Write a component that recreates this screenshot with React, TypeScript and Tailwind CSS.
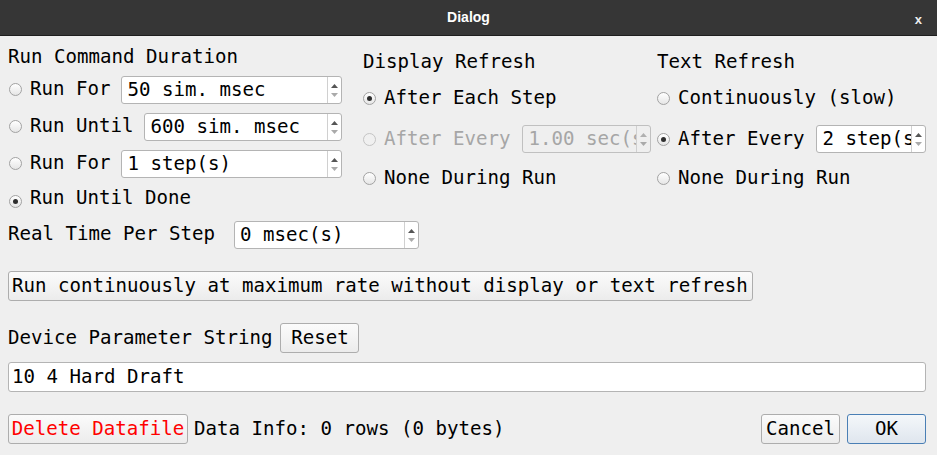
import React from "react";

const mono = "font-['DejaVu_Sans_Mono',monospace]";

function Radio({ checked = false, disabled = false }: { checked?: boolean; disabled?: boolean }) {
  return (
    <span
      className={`relative inline-flex h-[13px] w-[13px] shrink-0 items-center justify-center rounded-full border ${
        disabled ? "border-[#c4c4c4] bg-[#f0f0f0]" : "border-[#a2a2a2] bg-gradient-to-b from-[#ffffff] to-[#e6e6e6]"
      }`}
    >
      {checked && <span className="h-[5px] w-[5px] rounded-full bg-[#2e2e2e]" />}
    </span>
  );
}

function Spin({ value, width, disabled = false }: { value: string; width: string; disabled?: boolean }) {
  return (
    <div
      className={`flex h-[28px] ${width} shrink-0 overflow-hidden rounded-[3px] border ${
        disabled ? "border-[#c0c0c0] bg-[#efefef] text-[#a6a6a6]" : "border-[#b4b4b4] bg-white text-black"
      }`}
    >
      <div className="min-w-0 flex-1 overflow-hidden whitespace-nowrap pl-[5px] leading-[26px]">{value}</div>
      <div className="flex w-[14px] shrink-0 flex-col items-center justify-center gap-[5px] border-l border-[#d0d0d0]">
        <svg width="7" height="4" viewBox="0 0 7 4">
          <polygon points="0,4 7,4 3.5,0" fill={disabled ? "#b0b0b0" : "#555"} />
        </svg>
        <svg width="7" height="4" viewBox="0 0 7 4">
          <polygon points="0,0 7,0 3.5,4" fill="#aaa" />
        </svg>
      </div>
    </div>
  );
}

function Btn({ children, className = "" }: { children: React.ReactNode; className?: string }) {
  return (
    <div
      className={`flex h-[30px] shrink-0 items-center rounded-[3px] border border-[#adadad] bg-gradient-to-b from-[#fbfbfb] to-[#ececec] leading-[28px] ${className}`}
    >
      {children}
    </div>
  );
}

export default function App() {
  return (
    <div className={`h-[455px] w-[937px] overflow-hidden bg-[#efefef] text-[19.1px] text-black ${mono}`}>
      <div className="relative flex h-[36px] items-center justify-center border-b border-[#1e1e1e] bg-[#363636]">
        <span className="font-['Liberation_Sans',sans-serif] text-[14px] font-bold text-white">Dialog</span>
        <span className="absolute right-[15px] top-[10px] font-['Liberation_Sans',sans-serif] text-[13px] font-bold text-[#eeeeee]">
          x
        </span>
      </div>
      <div className="flex flex-col px-[8px] pt-[10px]">
        <div className="flex">
          {/* Column 1 */}
          <div className="flex w-[355px] flex-col">
            <div className="h-[22px] leading-[22px]">Run Command Duration</div>
            <div className="mt-[8px] flex h-[28px] items-center">
              <span className="ml-[1px]"><Radio /></span>
              <span className="-mt-[3px] ml-[8px] leading-[22px]">Run For</span>
              <span className="ml-[11px]"><Spin value="50 sim. msec" width="w-[221px]" /></span>
            </div>
            <div className="mt-[9px] flex h-[28px] items-center">
              <span className="ml-[1px]"><Radio /></span>
              <span className="-mt-[3px] ml-[8px] leading-[22px]">Run Until</span>
              <span className="ml-[11px]"><Spin value="600 sim. msec" width="w-[198px]" /></span>
            </div>
            <div className="mt-[9px] flex h-[28px] items-center">
              <span className="ml-[1px]"><Radio /></span>
              <span className="-mt-[3px] ml-[8px] leading-[22px]">Run For</span>
              <span className="ml-[11px]"><Spin value="1 step(s)" width="w-[221px]" /></span>
            </div>
            <div className="mt-[9px] flex h-[22px] items-center">
              <span className="ml-[1px]"><Radio checked /></span>
              <span className="ml-[8px] leading-[22px]">Run Until Done</span>
            </div>
          </div>
          {/* Column 2 */}
          <div className="flex w-[294px] flex-col">
            <div className="mt-[5px] h-[22px] leading-[22px]">Display Refresh</div>
            <div className="mt-[11px] flex h-[28px] items-center">
              <Radio checked />
              <span className="ml-[8px]">After Each Step</span>
            </div>
            <div className="mt-[13px] flex h-[28px] items-center">
              <Radio disabled />
              <span className="ml-[8px] text-[#a6a6a6]">After Every</span>
              <span className="ml-[12px]"><Spin value="1.00 sec(s)" width="w-[129px]" disabled /></span>
            </div>
            <div className="mt-[11px] flex h-[28px] items-center">
              <Radio />
              <span className="ml-[8px]">None During Run</span>
            </div>
          </div>
          {/* Column 3 */}
          <div className="flex flex-1 flex-col">
            <div className="mt-[5px] h-[22px] leading-[22px]">Text Refresh</div>
            <div className="mt-[11px] flex h-[28px] items-center">
              <Radio />
              <span className="ml-[8px]">Continuously (slow)</span>
            </div>
            <div className="mt-[13px] flex h-[28px] items-center">
              <Radio checked />
              <span className="ml-[8px]">After Every</span>
              <span className="ml-[12px]"><Spin value="2 step(s)" width="w-[110px]" /></span>
            </div>
            <div className="mt-[11px] flex h-[28px] items-center">
              <Radio />
              <span className="ml-[8px]">None During Run</span>
            </div>
          </div>
        </div>

        <div className="mt-[12px] flex h-[28px] items-center">
          <span className="-mt-[2px]">Real Time Per Step</span>
          <span className="ml-[19px]"><Spin value="0 msec(s)" width="w-[185px]" /></span>
        </div>

        <div className="mt-[22px] flex">
          <Btn className="w-[745px] pl-[3px]">Run continuously at maximum rate without display or text refresh</Btn>
        </div>

        <div className="mt-[22px] flex h-[30px] items-center">
          <span>Device Parameter String</span>
          <Btn className="ml-[8px] w-[79px] justify-center">Reset</Btn>
        </div>

        <div className="mt-[9px] flex h-[30px] w-[918px] items-center rounded-[3px] border border-[#b4b4b4] bg-white pl-[3px]">
          10 4 Hard Draft
        </div>

        <div className="mt-[22px] flex h-[30px] items-center">
          <Btn className="w-[180px] justify-center text-[#ff0000]">Delete Datafile</Btn>
          <span className="ml-[6px]">Data Info: 0 rows (0 bytes)</span>
          <div className="flex-1" />
          <Btn className="w-[79px] justify-center">Cancel</Btn>
          <div className="ml-[7px] flex h-[30px] w-[79px] items-center justify-center rounded-[3px] border border-[#4a7fb5] bg-gradient-to-b from-[#f4f7fa] to-[#dfe6ee]">
            OK
          </div>
          <div className="w-[3px]" />
        </div>
      </div>
    </div>
  );
}
